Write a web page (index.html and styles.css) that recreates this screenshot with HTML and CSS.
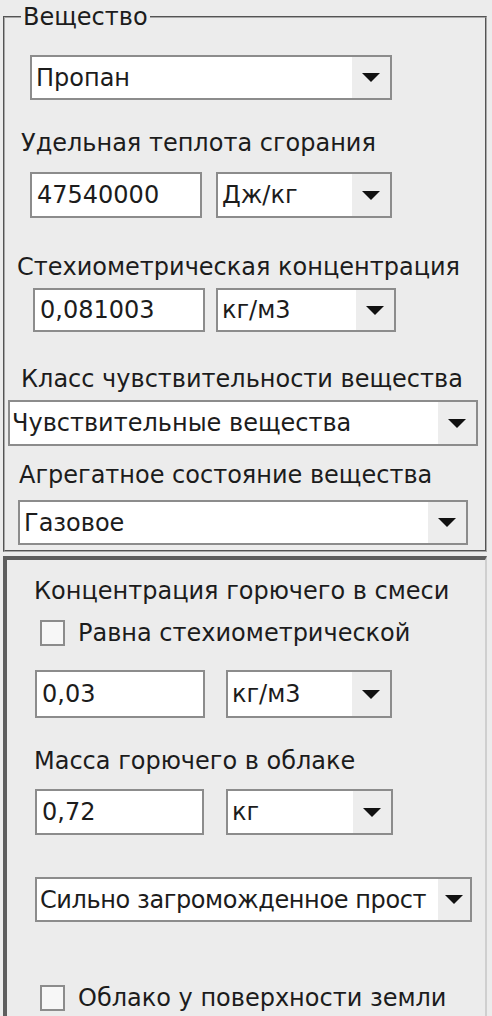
FILE: index.html
```html
<!DOCTYPE html>
<html lang="ru">
<head>
  <meta charset="UTF-8" />
  <meta name="viewport" content="width=device-width, initial-scale=1.0" />
  <title>Параметры вещества</title>
  <link rel="stylesheet" href="styles.css">
</head>
<body>

  <div class="form">
    <fieldset class="group">
      <legend>Вещество</legend>

      <div class="combo substance">
        <span class="value">Пропан</span>
        <span class="arrow"></span>
      </div>

      <div class="caption heat">Удельная теплота сгорания</div>
      <div class="row row-heat">
        <div class="edit">47540000</div>
        <div class="combo">
          <span class="value">Дж/кг</span>
          <span class="arrow"></span>
        </div>
      </div>

      <div class="caption stoich">Стехиометрическая концентрация</div>
      <div class="row row-stoich">
        <div class="edit">0,081003</div>
        <div class="combo">
          <span class="value">кг/м3</span>
          <span class="arrow"></span>
        </div>
      </div>

      <div class="caption sens">Класс чувствительности вещества</div>
      <div class="combo sens-combo">
        <span class="value">Чувствительные вещества</span>
        <span class="arrow"></span>
      </div>

      <div class="caption state">Агрегатное состояние вещества</div>
      <div class="combo state-combo">
        <span class="value">Газовое</span>
        <span class="arrow"></span>
      </div>
    </fieldset>

    <div class="panel">
      <div class="caption conc">Концентрация горючего в смеси</div>
      <label class="check check-stoich"><span class="box"></span>Равна стехиометрической</label>
      <div class="row row-conc">
        <div class="edit">0,03</div>
        <div class="combo">
          <span class="value">кг/м3</span>
          <span class="arrow"></span>
        </div>
      </div>

      <div class="caption mass">Масса горючего в облаке</div>
      <div class="row row-mass">
        <div class="edit">0,72</div>
        <div class="combo">
          <span class="value">кг</span>
          <span class="arrow"></span>
        </div>
      </div>

      <div class="combo space-combo">
        <span class="value">Сильно загроможденное прост</span>
        <span class="arrow"></span>
      </div>

      <label class="check check-ground"><span class="box"></span>Облако у поверхности земли</label>
    </div>
  </div>

</body>
</html>
```

FILE: styles.css
```css
body {
  margin: 0;
  padding: 0;
  background: #ececec;
  color: #1c1c1c;
  font-family: "DejaVu Sans", Verdana, sans-serif;
  font-size: 24px;
  overflow: hidden;
}

.form {
  width: 486px;
  padding: 3px 0 0 3px;
}

/* group box */
.group {
  margin: 0;
  padding: 0 0 5px 0;
  width: 480px;
  border: 2px groove #f4f4f4;
  border-color: #a8a8a8;
}

.group legend {
  margin-left: 16px;
  padding: 0 2px;
  line-height: 28px;
}

.caption {
  height: 28px;
  line-height: 28px;
  white-space: nowrap;
}

.row {
  display: flex;
}

/* text box */
.edit {
  box-sizing: border-box;
  background: #fff;
  border: 2px solid #8c8c8c;
  padding: 0 5px;
  display: flex;
  align-items: center;
}

/* drop-down */
.combo {
  box-sizing: border-box;
  display: flex;
  background: #fff;
  border: 2px solid #8c8c8c;
}

.combo .value {
  flex: 1;
  min-width: 0;
  padding-left: 4px;
  display: flex;
  align-items: center;
  white-space: nowrap;
  overflow: hidden;
}

.combo .arrow {
  width: 38px;
  flex: none;
  background: #ededed;
  display: flex;
  align-items: center;
  justify-content: center;
}

.combo .arrow::after {
  content: "";
  border-left: 9px solid transparent;
  border-right: 9px solid transparent;
  border-top: 9px solid #111;
}

/* first group */
.substance { margin: 24px 0 0 25px; width: 362px; height: 45px; }

.heat { margin: 29px 0 0 16px; }
.row-heat { margin: 15px 0 0 25px; height: 46px; }
.row-heat .edit { width: 172px; }
.row-heat .combo { width: 176px; margin-left: 14px; }

.stoich { margin: 35px 0 0 12px; }
.row-stoich { margin: 7px 0 0 28px; height: 44px; }
.row-stoich .edit { width: 172px; }
.row-stoich .combo { width: 180px; margin-left: 11px; }

.sens { margin: 33px 0 0 16px; }
.sens-combo { margin: 7px 0 0 3px; width: 470px; height: 46px; }
.sens-combo .value { padding-left: 2px; }

.state { margin: 15px 0 0 14px; }
.state-combo { margin: 11px 0 0 13px; width: 450px; height: 45px; }

/* second panel */
.panel {
  margin-top: 4px;
  width: 478px;
  height: 470px;
  border-style: solid;
  border-width: 4px 2px 0 4px;
  border-color: #5e5e5e #cfcfcf #cfcfcf #5e5e5e;
}

.conc { margin: 17px 0 0 27px; }

.check {
  display: flex;
  align-items: center;
  height: 30px;
  white-space: nowrap;
}

.check .box {
  box-sizing: border-box;
  width: 25px;
  height: 26px;
  margin-right: 13px;
  background: #f7f7f7;
  border: 2px solid #8c8c8c;
}

.check-stoich { margin: 13px 0 0 33px; }

.row-conc { margin: 22px 0 0 28px; height: 48px; }
.row-conc .edit { width: 170px; }
.row-conc .combo { width: 166px; margin-left: 21px; }

.mass { margin: 29px 0 0 27px; }
.row-mass { margin: 14px 0 0 28px; height: 46px; }
.row-mass .edit { width: 169px; }
.row-mass .combo { width: 167px; margin-left: 22px; }

.space-combo { margin: 42px 0 0 28px; width: 437px; height: 45px; }
.space-combo .value { padding-left: 3px; letter-spacing: -0.4px; }
.space-combo .arrow { width: 32px; }

.check-ground { margin: 61px 0 0 33px; }
```
